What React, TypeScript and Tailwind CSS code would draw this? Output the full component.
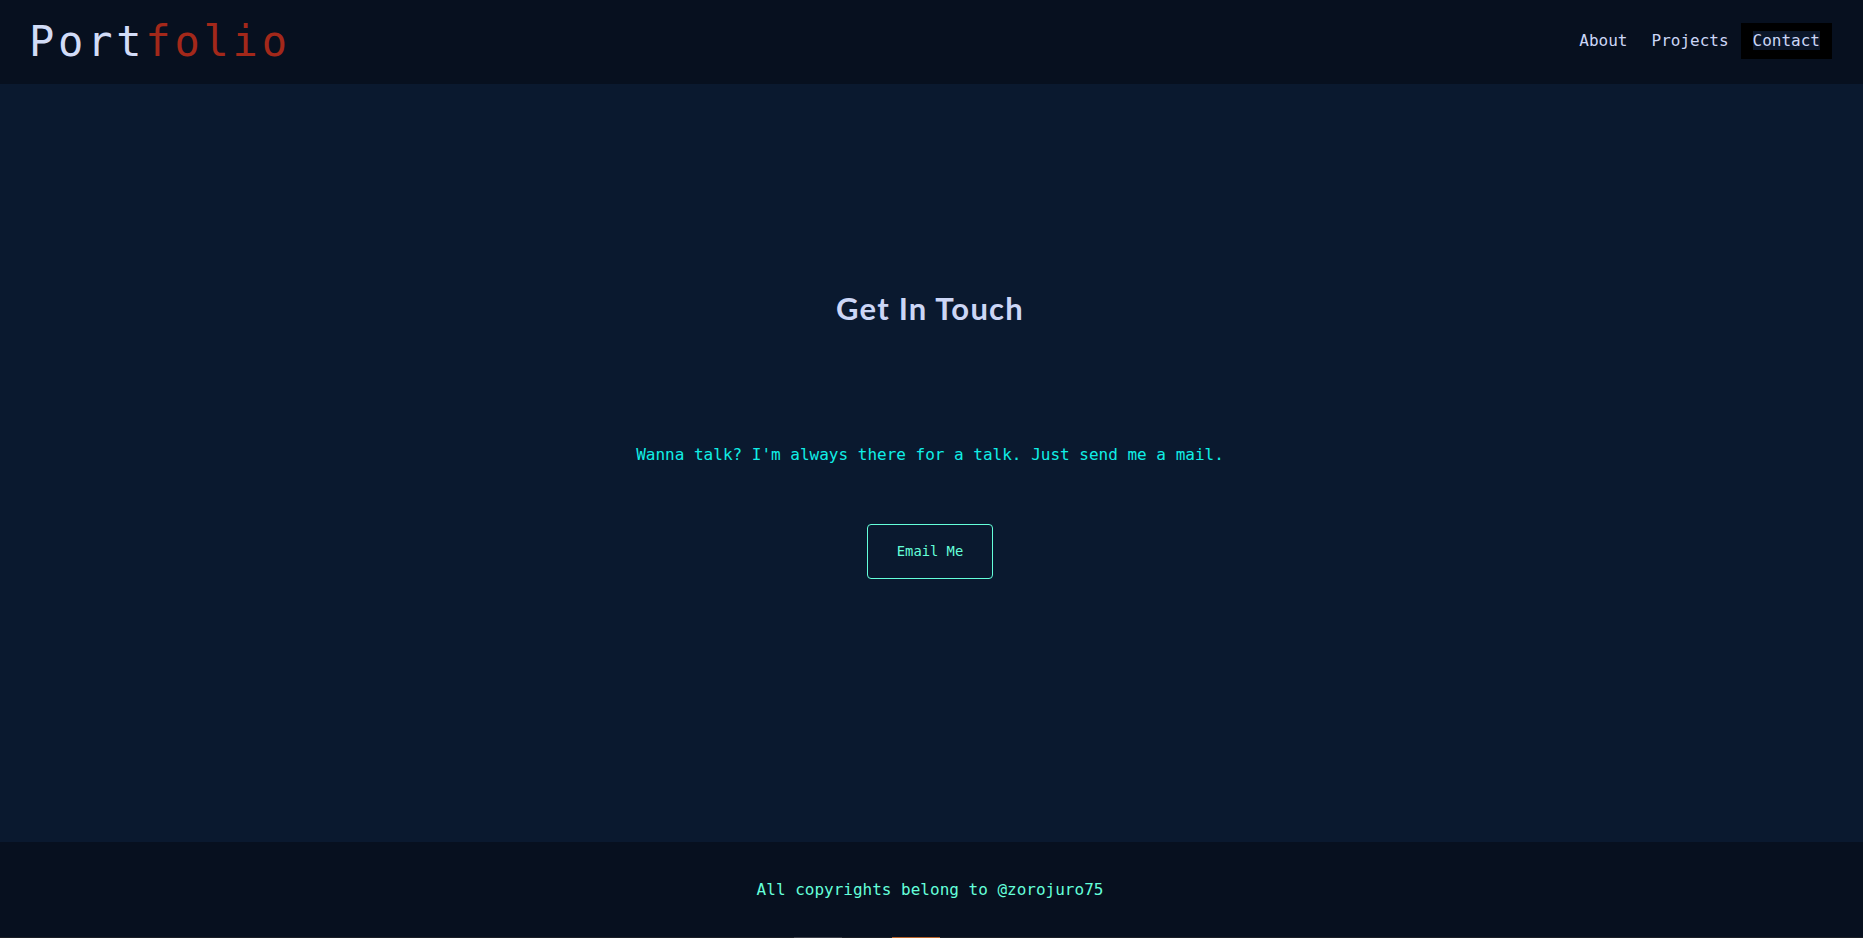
const mono = "font-['DejaVu_Sans_Mono','Liberation_Mono',monospace]";

function Header() {
  return (
    <header className="flex h-[84px] items-center justify-between bg-[#07101f] pl-[29px] pr-[31px]">
      <a className={`${mono} text-[42px] leading-[50px] tracking-[3.8px]`}>
        <span className="text-[#d2dcf7]">Port</span>
        <span className="text-[#a3281a]">folio</span>
      </a>
      <nav className={`${mono} mb-[2px] flex items-center text-[16px] leading-[24px] text-[#ccd6f6]`}>
        <a className="px-[12px] py-[6px]">About</a>
        <a className="px-[12px] py-[6px]">Projects</a>
        <a className="bg-black px-[12px] py-[6px]">
          <span className="bg-[#0b1629]">Contact</span>
        </a>
      </nav>
    </header>
  );
}

function Contact() {
  return (
    <main className="flex h-[758px] flex-col items-center bg-[#0a192f] pr-[3px] pt-[206px]">
      <h2 className="font-['Lato',sans-serif] text-[31px] font-bold leading-[36px] tracking-[1.2px] text-[#ccd6f6]">
        Get In Touch
      </h2>
      <p className={`${mono} mt-[117px] text-[16px] leading-[24px] text-[#10eee6]`}>
        Wanna talk? I'm always there for a talk. Just send me a mail.
      </p>
      <a
        className={`${mono} mt-[57px] flex h-[55px] w-[126px] items-center justify-center rounded-[4px] border border-[#64ffda] text-[13.8px] text-[#64ffda]`}
      >
        Email Me
      </a>
    </main>
  );
}

function Footer() {
  return (
    <footer className="flex h-[95px] items-center justify-center bg-[#07101f] pr-[3px]">
      <p className={`${mono} text-[16px] leading-[24px] text-[#64ffda]`}>
        All copyrights belong to @zorojuro75
      </p>
    </footer>
  );
}

export default function App() {
  return (
    <div className="flex min-h-[938px] flex-col bg-[#07101f]">
      <Header />
      <Contact />
      <Footer />
      <div className="flex h-[1px] bg-[#1b1f26]">
        <div className="ml-[794px] w-[48px] bg-[#3d4048]" />
        <div className="ml-[50px] w-[48px] bg-[#b8642a]" />
      </div>
    </div>
  );
}
